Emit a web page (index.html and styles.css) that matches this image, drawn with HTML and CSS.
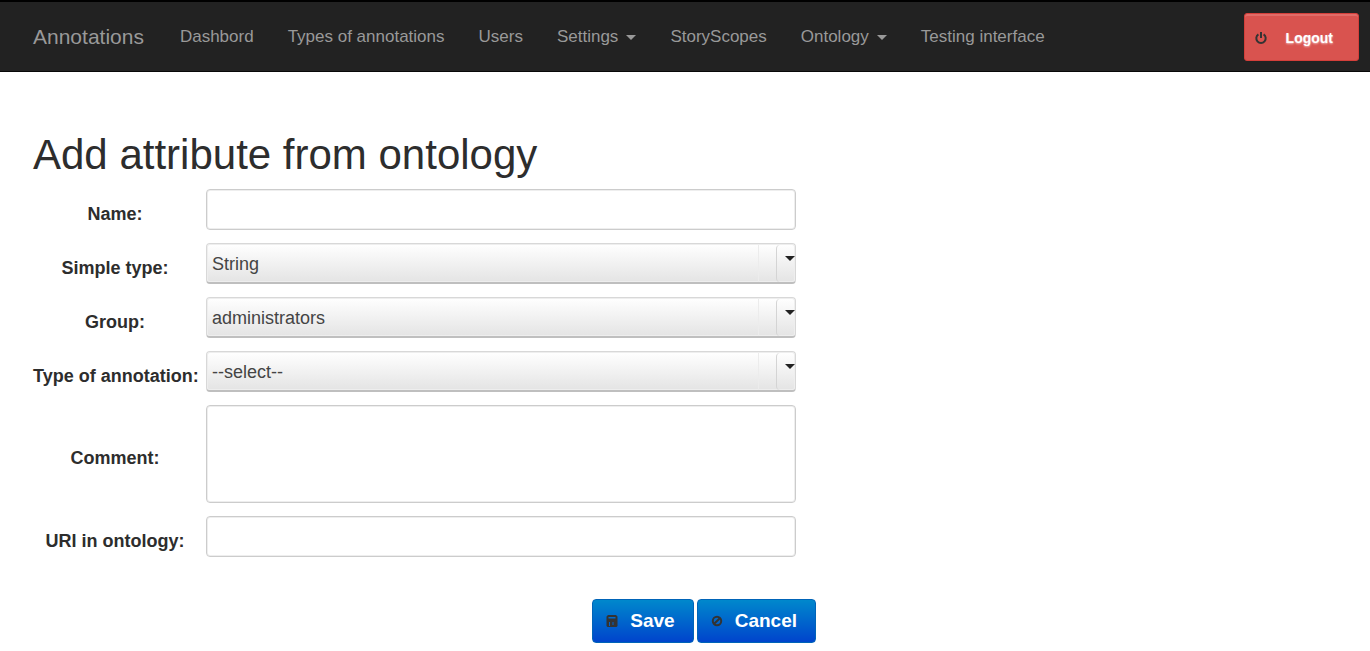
FILE: index.html
```html
<!DOCTYPE html>
<html lang="en">
<head>
<meta charset="utf-8">
<title>Add attribute from ontology</title>
<link rel="stylesheet" href="styles.css">
</head>
<body>
<header class="navbar">
  <a class="brand" href="#">Annotations</a>
  <nav class="menu">
    <a href="#">Dashbord</a>
    <a href="#">Types of annotations</a>
    <a href="#">Users</a>
    <a href="#">Settings<span class="caret"></span></a>
    <a href="#">StoryScopes</a>
    <a href="#">Ontology<span class="caret"></span></a>
    <a href="#">Testing interface</a>
  </nav>
  <button class="logout" type="button">
    <svg width="12" height="14" viewBox="0 0 12 14" fill="none" stroke="#333" stroke-width="2" aria-hidden="true"><path d="M3.4 3.4a4.7 4.7 0 1 0 5.2 0M6 1v6"/></svg>
    <span>Logout</span>
  </button>
</header>
<main class="page">
  <h1>Add attribute from ontology</h1>
  <form class="form">
    <div class="fields">
      <label for="name">Name:</label>
      <input id="name" class="field" type="text">
      <label for="type">Simple type:</label>
      <div class="select"><select id="type"><option>String</option></select><span class="arrow"></span></div>
      <label for="group">Group:</label>
      <div class="select"><select id="group"><option>administrators</option></select><span class="arrow"></span></div>
      <label for="annotation">Type of annotation:</label>
      <div class="select"><select id="annotation"><option>--select--</option></select><span class="arrow"></span></div>
      <label for="comment">Comment:</label>
      <textarea id="comment" class="field comment"></textarea>
      <label for="uri">URI in ontology:</label>
      <input id="uri" class="field" type="text">
    </div>
    <div class="actions">
      <button class="action" type="submit">
        <svg width="12" height="12" viewBox="0 0 12 12" aria-hidden="true"><path fill="#333" fill-rule="evenodd" d="M2 0h8l1.500 1.500V11l-1 1h-9l-1-1V1.500zM2.500 2v1.500h7V2zM3 7v4h1V7zM6.500 7v3h1V7z"/></svg>
        <span>Save</span>
      </button>
      <button class="action" type="button">
        <svg width="12" height="12" viewBox="0 0 12 12" fill="none" stroke="#333" stroke-width="2" aria-hidden="true"><circle cx="6" cy="6" r="4.200"/><path d="M3.200 8.800l5.600-5.600"/></svg>
        <span>Cancel</span>
      </button>
    </div>
  </form>
</main>
</body>
</html>
```
FILE: styles.css
```css
* {
  box-sizing: border-box;
}

body {
  margin: 0;
  background: #fff;
  color: #2d2d2d;
  font: 18px/24px "Liberation Sans", Arial, sans-serif;
}

.navbar {
  display: flex;
  align-items: center;
  gap: 36px;
  height: 72px;
  padding: 1px 11px 0 33px;
  background: #222;
  border-top: 2px solid #000;
  border-bottom: 1px solid #080808;
}

.navbar a {
  color: #999;
  text-decoration: none;
  white-space: nowrap;
}

.brand {
  font-size: 21px;
}

.menu {
  display: flex;
  gap: 34px;
  font-size: 17px;
}

.caret {
  display: inline-block;
  margin-left: 8px;
  border: 5px solid transparent;
  border-top-color: #999;
  border-bottom: 0;
  vertical-align: middle;
}

.logout,
.action {
  display: flex;
  align-items: center;
  font-family: inherit;
  font-weight: bold;
  color: #fff;
  border-radius: 4px;
}

.logout {
  gap: 19px;
  height: 48px;
  margin-left: auto;
  padding: 1px 25px 0 10px;
  background: #d9534f;
  border: 1px solid #d43f3a;
  box-shadow: inset 0 2px 0 #e16c68;
  border-radius: 3px;
  font-size: 14px;
  text-shadow: 0 1px 2px rgba(255, 255, 255, 0.6);
}

.page {
  padding: 57px 33px 8px;
}

h1 {
  margin: 0 0 8px;
  font-size: 42px;
  font-weight: normal;
  line-height: 52px;
}

.form {
  max-width: 783px;
}

.fields {
  display: grid;
  grid-template-columns: 164px 1fr;
  align-items: center;
  gap: 13px 9px;
  padding-right: 20px;
}

.fields label {
  padding-top: 8px;
  font-weight: bold;
  text-align: center;
  white-space: nowrap;
}

.field,
.select select {
  display: block;
  width: 100%;
  height: 41px;
  margin: 0;
  padding: 0 5px;
  border: 1px solid #ccc;
  border-radius: 4px;
  background: #fff;
  box-shadow: inset 0 0 0 1px #eee;
  color: #444;
  font: inherit;
}

.field.comment {
  height: 98px;
  resize: none;
}

.select {
  position: relative;
}

.select select {
  appearance: none;
  padding: 2px 44px 0 5px;
  border-color: #d8d8d8;
  border-bottom: 2px solid #bfbfbf;
  background: linear-gradient(#fff, #e4e4e4);
}

.arrow {
  position: absolute;
  top: 2px;
  right: 1px;
  bottom: 2px;
  width: 19px;
  border-left: 1px solid #d4d4d4;
  border-radius: 4px;
  pointer-events: none;
}

.arrow::before {
  content: "";
  position: absolute;
  top: 0;
  bottom: 0;
  right: 36px;
  border-right: 1px solid #ececec;
}

.arrow::after {
  content: "";
  position: absolute;
  top: 11px;
  right: 0;
  border: 5px solid transparent;
  border-top-color: #222;
  border-bottom: 0;
}

.actions {
  display: flex;
  justify-content: flex-end;
  gap: 3px;
  margin-top: 42px;
}

.action {
  gap: 12px;
  height: 44px;
  padding: 0 18px 0 13px;
  border: 1px solid #0064b8;
  background: linear-gradient(#08c, #04c);
  font-size: 19px;
}
```
